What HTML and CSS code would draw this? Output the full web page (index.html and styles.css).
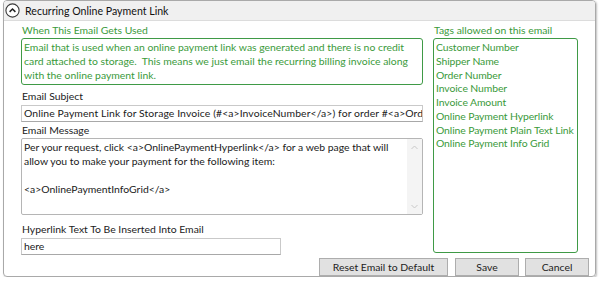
FILE: index.html
```html
<!DOCTYPE html>
<html lang="en">
<head>
    <meta charset="UTF-8">
    <title>Recurring Online Payment Link</title>
    <link rel="stylesheet" href="styles.css">
</head>
<body>
    <div class="panel">
        <header class="panel-header">
            <svg class="collapse-icon" width="15" height="15" viewBox="0 0 15 15">
                <circle cx="7.5" cy="7.5" r="6.6" fill="#fff" stroke="#3a3a3a" stroke-width="1.1"/>
                <polyline points="4.6,8.9 7.5,6 10.4,8.9" fill="none" stroke="#222" stroke-width="1.5"/>
            </svg>
            <span class="panel-title">Recurring Online Payment Link</span>
        </header>

        <div class="panel-body">
            <div class="editor">
                <div class="field-label green">When This Email Gets Used</div>
                <div class="usage-box">Email that is used when an online payment link was generated and there is no credit card attached to storage.&nbsp; This means we just email the recurring billing invoice along with the online payment link.</div>

                <div class="field-label gap-sm">Email Subject</div>
                <div class="text-input subject">Online Payment Link for Storage Invoice (#&lt;a&gt;InvoiceNumber&lt;/a&gt;) for order #&lt;a&gt;OrderNumber&lt;/a&gt;</div>

                <div class="field-label">Email Message</div>
                <div class="message-box">
                    <div class="message-text">Per your request, click &lt;a&gt;OnlinePaymentHyperlink&lt;/a&gt; for a web page that will allow you to make your payment for the following item:<br><br>&lt;a&gt;OnlinePaymentInfoGrid&lt;/a&gt;</div>
                    <div class="scrollbar">
                        <svg width="7" height="5" viewBox="0 0 7 5"><polyline points="0.5,4 3.5,1 6.5,4" fill="none" stroke="#c8c8c8" stroke-width="1"/></svg>
                        <svg width="7" height="5" viewBox="0 0 7 5"><polyline points="0.5,1 3.5,4 6.5,1" fill="none" stroke="#c8c8c8" stroke-width="1"/></svg>
                    </div>
                </div>

                <div class="field-label gap-md">Hyperlink Text To Be Inserted Into Email</div>
                <div class="text-input link-text">here</div>
            </div>

            <div class="tags">
                <div class="field-label green">Tags allowed on this email</div>
                <ul class="tag-list">
                    <li>Customer Number</li>
                    <li>Shipper Name</li>
                    <li>Order Number</li>
                    <li>Invoice Number</li>
                    <li>Invoice Amount</li>
                    <li>Online Payment Hyperlink</li>
                    <li>Online Payment Plain Text Link</li>
                    <li>Online Payment Info Grid</li>
                </ul>
            </div>
        </div>

        <footer class="panel-footer">
            <button class="btn btn-reset">Reset Email to Default</button>
            <button class="btn btn-save">Save</button>
            <button class="btn btn-cancel">Cancel</button>
        </footer>
    </div>
</body>
</html>
```

FILE: styles.css
```css
* {
    margin: 0;
    padding: 0;
    box-sizing: border-box;
}

body {
    background: #ffffff;
    color: #1a1a1a;
    font-family: Lato, "Liberation Sans", sans-serif;
    font-size: 10.4px;
}

/* 外框 */
.panel {
    margin: 0 0 0 3px;
    width: 593px;
    height: 277px;
    border: 1px solid #a9a9a9;
    border-radius: 4px;
    box-shadow: 1px 1px 2px rgba(0, 0, 0, 0.25);
    overflow: hidden;
    display: flex;
    flex-direction: column;
}

.panel-header {
    height: 22px;
    background: #f0f0f0;
    border-bottom: 1px solid #dcdcdc;
    display: flex;
    align-items: center;
    padding-left: 1px;
}

.collapse-icon {
    display: block;
    margin-right: 5px;
}

.panel-title {
    font-size: 10.6px;
    color: #111;
}

/* 主体 */
.panel-body {
    display: flex;
    gap: 10px;
    padding: 1px 16px 0 17px;
}

.editor {
    width: 402px;
}

.field-label {
    height: 16px;
    line-height: 16px;
    color: #222;
    padding-left: 1px;
}

.green {
    color: #3a9a3a;
}

.gap-sm {
    margin-top: 3px;
}

.gap-md {
    margin-top: 6px;
}

.usage-box {
    height: 47px;
    border: 1px solid #3f9a46;
    border-radius: 3px;
    padding: 1px 2px;
    line-height: 14px;
    color: #3a9a3a;
}

.text-input {
    height: 17px;
    border: 1px solid #c9c9c9;
    border-bottom-color: #a8a8a8;
    padding: 0 2px;
    line-height: 15px;
    white-space: nowrap;
    overflow: hidden;
}

.subject {
    margin-top: 1px;
    letter-spacing: 0.1px;
}

.link-text {
    width: 260px;
    margin-top: 1px;
}

.message-box {
    height: 77px;
    border: 1px solid #b5b5b5;
    border-radius: 2px;
    display: flex;
}

.message-text {
    flex: 1;
    padding: 1px 2px;
    line-height: 14px;
}

.scrollbar {
    width: 15px;
    background: #f4f4f4;
    display: flex;
    flex-direction: column;
    justify-content: space-between;
    align-items: center;
    padding: 6px 0 5px;
}

.scrollbar svg {
    display: block;
}

/* 标签列表 */
.tags {
    width: 145px;
}

.tag-list {
    list-style: none;
    height: 215px;
    border: 1px solid #3f9a46;
    border-radius: 3px;
    padding: 2px 1px 2px 2px;
    line-height: 13.75px;
    color: #3a9a3a;
    white-space: nowrap;
    letter-spacing: -0.1px;
    overflow: hidden;
}

/* 按钮 */
.panel-footer {
    display: flex;
    justify-content: flex-end;
    gap: 6px;
    padding: 3px 6px 0 0;
}

.btn {
    height: 18px;
    background: #e1e1e1;
    border: 1px solid #adadad;
    font-family: inherit;
    font-size: 10.4px;
    color: #222;
}

.btn-reset {
    width: 129px;
    margin-right: 1px;
}

.btn-save {
    width: 64px;
}

.btn-cancel {
    width: 64px;
}
```
